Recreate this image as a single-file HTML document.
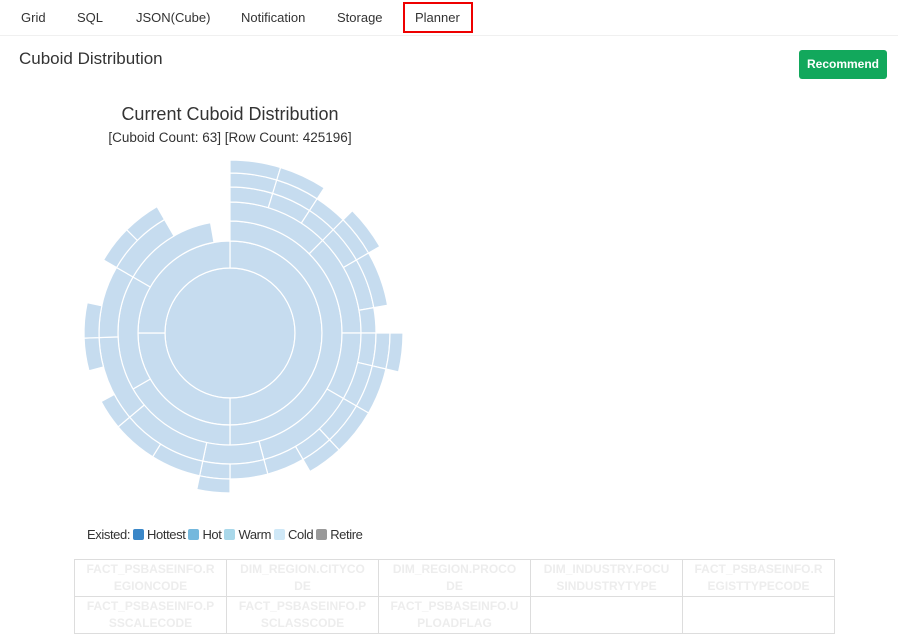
<!DOCTYPE html>
<html><head><meta charset="utf-8"><style>
*{margin:0;padding:0;box-sizing:border-box}
body{width:898px;height:641px;background:#fff;font-family:"Liberation Sans",Arial,sans-serif;position:relative;overflow:hidden;color:#333}
.tab{position:absolute;top:10px;font-size:13px;color:#333}
.bar{position:absolute;left:0;top:35px;width:898px;height:1px;background:#f0f0f0}
.planner{position:absolute;left:403px;top:2px;width:70px;height:31px;border:2px solid #e00;font-size:13px;padding:6px 0 0 10px}
.h{position:absolute;left:19px;top:49px;font-size:17px;color:#333}
.btn{position:absolute;left:799px;top:50px;width:88px;height:29px;background:#12a85c;border-radius:3px;color:#fff;font-size:12px;font-weight:bold;text-align:center;line-height:28px}
.ct{position:absolute;left:0;width:460px;text-align:center}
.leg{position:absolute;left:87px;top:527px;font-size:13px;letter-spacing:-0.4px;color:#333;display:flex;align-items:center}
.sq{display:inline-block;width:11px;height:11px;border-radius:2px;margin:0 3px 0 3px}
table{position:absolute;left:74px;top:559px;border-collapse:collapse}
td{border:1px solid #ddd;width:152px;height:37px;text-align:center;font-size:12px;font-weight:bold;color:#ededed;line-height:17px;vertical-align:middle}
</style></head><body>
<div class="tab" style="left:21px">Grid</div>
<div class="tab" style="left:77px">SQL</div>
<div class="tab" style="left:136px">JSON(Cube)</div>
<div class="tab" style="left:241px">Notification</div>
<div class="tab" style="left:337px">Storage</div>
<div class="planner">Planner</div>
<div class="bar"></div>
<div class="h">Cuboid Distribution</div>
<div class="btn">Recommend</div>
<div class="ct" style="top:104px;font-size:18px">Current Cuboid Distribution</div>
<div class="ct" style="top:130px;font-size:13.5px">[Cuboid Count: 63] [Row Count: 425196]</div>
<svg id="sb" width="898" height="641" style="position:absolute;left:0;top:0"></svg>
<div class="leg">Existed:<span class="sq" style="background:#3a87c8"></span>Hottest<span class="sq" style="background:#74b8dd"></span>Hot<span class="sq" style="background:#a9d8ea"></span>Warm<span class="sq" style="background:#cfe8f7"></span>Cold<span class="sq" style="background:#999"></span>Retire</div>
<table>
<tr><td>FACT_PSBASEINFO.R<br>EGIONCODE</td><td>DIM_REGION.CITYCO<br>DE</td><td>DIM_REGION.PROCO<br>DE</td><td>DIM_INDUSTRY.FOCU<br>SINDUSTRYTYPE</td><td>FACT_PSBASEINFO.R<br>EGISTTYPECODE</td></tr>
<tr><td>FACT_PSBASEINFO.P<br>SSCALECODE</td><td>FACT_PSBASEINFO.P<br>SCLASSCODE</td><td>FACT_PSBASEINFO.U<br>PLOADFLAG</td><td></td><td></td></tr>
</table>
<script>
var cx=230,cy=333,R=[0,65,92,112,131,146,160,173];
var spans=[[0,17,7],[17,33,7],[33,45,6],[45,60,7],[60,80,6],[80,90,5],[90,103,7],[103,120,6],[120,137,6],[137,150,6],[150,165,5],[165,180,5],[180,192,6],[192,212,5],[212,230,5],[230,242,5],[242,255,4],[255,268,5],[268,282,5],[282,300,4],[300,315,5],[315,330,5],[330,350,3],[350,360,2]];
var rings={1:[[0,180],[180,270],[270,360]],2:[[0,180],[180,240],[240,300],[300,350]]};
for(var k=3;k<=6;k++){rings[k]=[];var cur=null;
spans.forEach(function(s){if(s[2]>k){
 if(k==3){ if(cur&&cur[1]==s[0]&&(s[1]-cur[0])<=45){cur[1]=s[1];}else{cur=[s[0],s[1]];rings[k].push(cur);} }
 else rings[k].push([s[0],s[1]]);
}else cur=null;});}
function p(r,a){a=(a-90)*Math.PI/180;return (cx+r*Math.cos(a)).toFixed(2)+","+(cy+r*Math.sin(a)).toFixed(2)}
var s='<circle cx="'+cx+'" cy="'+cy+'" r="65" fill="#c6dcef" stroke="#fff" stroke-width="1.2"/>';
for(var k in rings){var r0=R[k],r1=R[+k+1];rings[k].forEach(function(g){var a0=g[0],a1=g[1],l=(a1-a0)>180?1:0;
s+='<path d="M'+p(r0,a0)+'L'+p(r1,a0)+'A'+r1+','+r1+' 0 '+l+' 1 '+p(r1,a1)+'L'+p(r0,a1)+'A'+r0+','+r0+' 0 '+l+' 0 '+p(r0,a0)+'Z" fill="#c6dcef" stroke="#fff" stroke-width="1.2"/>';});}
document.getElementById('sb').innerHTML=s;
</script>
</body></html>
